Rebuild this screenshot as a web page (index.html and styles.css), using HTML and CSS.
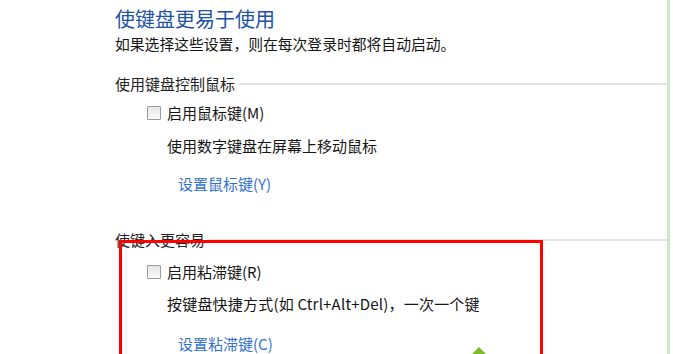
FILE: index.html
```
<!DOCTYPE html>
<html lang="zh-CN">
<head>
	<meta charset="UTF-8">
	<title>使键盘更易于使用</title>
	<link rel="stylesheet" href="styles.css">
</head>
<body>
	<div class="page">
		<h1 class="title">使键盘更易于使用</h1>
		<p class="intro">如果选择这些设置，则在每次登录时都将自动启动。</p>

		<div class="group">
			<h2 class="group-head">使用键盘控制鼠标</h2>
			<label class="check"><span class="box"></span>启用鼠标键(M)</label>
			<p class="desc">使用数字键盘在屏幕上移动鼠标</p>
			<a class="link" href="#">设置鼠标键(Y)</a>
		</div>

		<div class="group second">
			<h2 class="group-head">使键入更容易</h2>
			<label class="check"><span class="box"></span>启用粘滞键(R)</label>
			<p class="desc">按键盘快捷方式(如 Ctrl+Alt+Del)，一次一个键</p>
			<a class="link" href="#">设置粘滞键(C)</a>
		</div>

		<!-- 标注 -->
		<div class="mark"></div>
		<div class="arrow"></div>
	</div>
</body>
</html>
```

FILE: styles.css
```
* {
	margin: 0;
	padding: 0;
}
html, body {
	height: 100%;
	overflow: hidden;
	background: #fff;
}
body {
	font-family: "Noto Sans CJK SC", "Noto Sans", sans-serif;
	color: #151515;
	font-size: 15px;
}
.page {
	position: relative;
	width: 670px;
	height: 354px;
	overflow: hidden;
	border-right: 3px solid #cde8c8;
	padding: 7px 0 0 115px;
	box-sizing: border-box;
}
.title {
	font-size: 20px;
	font-weight: normal;
	line-height: 24px;
	color: #2152a6;
}
.intro {
	margin-top: 3px;
	font-size: 14.8px;
	line-height: 20px;
}
.group {
	margin-top: 20px;
}
.group.second {
	margin-top: 36px;
}
.group-head {
	display: flex;
	align-items: center;
	font-size: 15px;
	font-weight: normal;
	line-height: 20px;
	color: #222;
}
.group-head::after {
	content: "";
	flex: 1;
	height: 2px;
	margin-left: 4px;
	margin-top: -1px;
	background: #e4e4e4;
}
.check {
	display: flex;
	align-items: center;
	margin: 9px 0 0 32px;
	line-height: 20px;
}
.second .check {
	margin-top: 12px;
}
.box {
	width: 12px;
	height: 12px;
	margin-right: 6px;
	border: 1px solid #9a9a9a;
	border-radius: 1px;
	background: linear-gradient(#e6e6e6, #fbfbfb);
}
.desc {
	margin: 13px 0 0 52px;
	line-height: 20px;
}
.second .desc {
	margin-top: 12px;
	letter-spacing: 0.2px;
}
.link {
	display: block;
	margin: 18px 0 0 63px;
	line-height: 20px;
	color: #3372cc;
	text-decoration: none;
}
.second .link {
	margin-top: 20px;
}
.mark {
	position: absolute;
	left: 119px;
	top: 240px;
	width: 418px;
	height: 130px;
	border: 3px solid #ff0000;
}
.arrow {
	position: absolute;
	left: 472px;
	top: 347px;
	border: 7px solid transparent;
	border-bottom: 7px solid #7dbb2c;
	border-top: 0;
}
```
